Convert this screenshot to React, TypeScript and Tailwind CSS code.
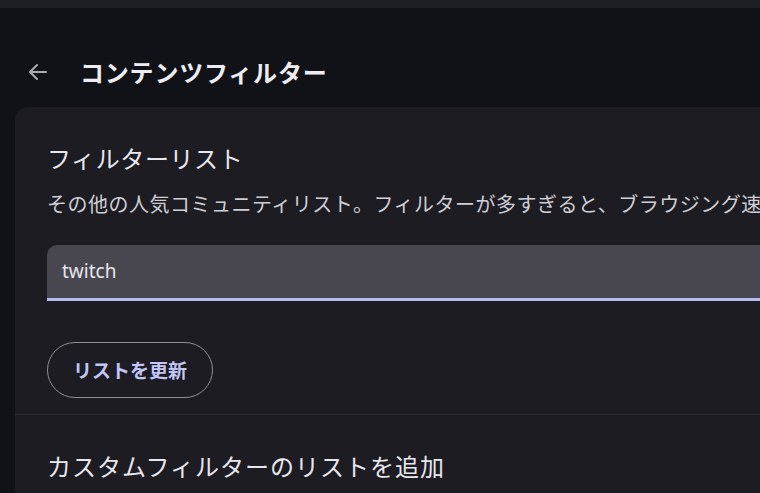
import React from "react";

export default function App() {
  return (
    <div
      className="w-[760px] h-[493px] overflow-hidden bg-[#111217] text-[#e4e3ea] flex flex-col"
      style={{ fontFamily: '"Noto Sans CJK JP", "Noto Sans", sans-serif' }}
    >
      <div className="h-[8px] shrink-0 bg-[#1e1f24]" />
      <div className="h-[99px] shrink-0 flex items-start pl-[26px] pt-[52px]">
        <svg width="24" height="24" viewBox="0 0 24 24" className="text-[#a9a9b2]">
          <path d="M20 12H5M11 5l-7 7 7 7" fill="none" stroke="currentColor" strokeWidth="2" strokeLinecap="round" strokeLinejoin="round" />
        </svg>
        <h1 className="ml-[30px] text-[24px] font-bold leading-[24px] tracking-[0.8px] text-[#ececf1]">
          コンテンツフィルター
        </h1>
      </div>
      <div className="ml-[15px] w-[800px] flex-1 rounded-tl-[14px] bg-[#1c1c22]">
        <div className="pl-[32px] pt-[35px]">
          <h2 className="text-[24px] leading-[32px] font-normal tracking-[0.6px] text-[#e8e7ee]">フィルターリスト</h2>
          <p className="mt-[16px] text-[20px] leading-[28px] whitespace-nowrap text-[#cfced6] tracking-[0.5px]">
            その他の人気コミュニティリスト。フィルターが多すぎると、ブラウジング速度が遅くなる場合があります。
          </p>
          <div className="mt-[27px] h-[56px] rounded-t-[10px] bg-[#48474f] border-b-[3px] border-[#b6bcf0] flex items-center pl-[15px]">
            <span className="text-[19px] text-[#e6e5ec]" style={{ fontFamily: '"Noto Sans", sans-serif' }}>twitch</span>
          </div>
          <button className="mt-[41px] h-[56px] w-[166px] rounded-full border-[1.5px] border-[#8f8f99] text-[19px] font-bold text-[#c2c5f6] flex items-center justify-center">
            リストを更新
          </button>
        </div>
        <div className="mt-[16px] h-[1px] bg-[#2e2e35]" />
        <div className="pl-[32px] pt-[35px]">
          <h2 className="text-[24px] leading-[32px] tracking-[1px] text-[#e8e7ee]">カスタムフィルターのリストを追加</h2>
        </div>
      </div>
    </div>
  );
}
